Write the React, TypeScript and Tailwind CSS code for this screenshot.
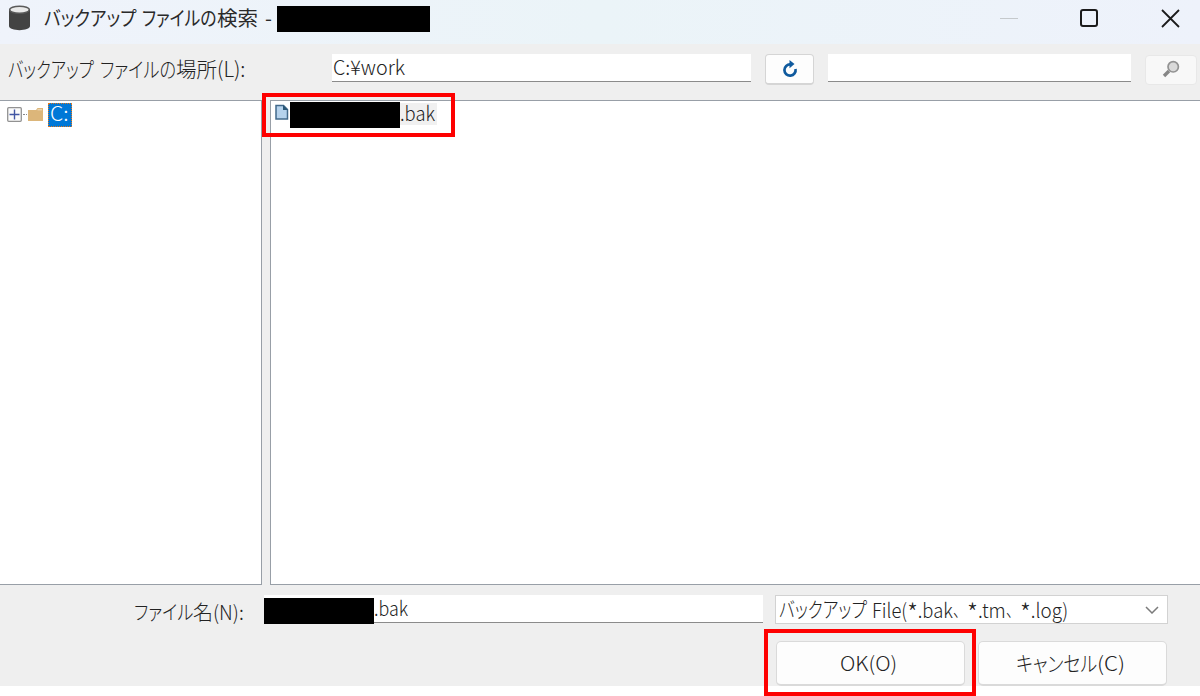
import React, { useLayoutEffect, useRef, useState } from 'react'

type FitProps = {
  className: string
  children: React.ReactNode
}

// UI Gothic has narrow kana, so every run is squeezed into the width of its box
const Fit: React.FC<FitProps> = ({ className, children }) => {
  const box = useRef<HTMLSpanElement>(null)
  const text = useRef<HTMLSpanElement>(null)
  const [scale, setScale] = useState<number>(1)

  useLayoutEffect(() => {
    if (!box.current || !text.current) return
    setScale(box.current.clientWidth / text.current.offsetWidth)
  }, [])

  return (
    <span ref={box} className={`inline-block shrink-0 whitespace-nowrap ${className}`}>
      <span ref={text} className="inline-block origin-left" style={{ transform: `scaleX(${scale})` }}>
        {children}
      </span>
    </span>
  )
}

const Star = () => <span className="relative top-[5px] text-[26px] leading-none">*</span>

const DatabaseIcon = () => (
  <svg className="ml-2 h-[26px] w-[23px]" viewBox="0 0 23 26">
    <path d="M1 5v16c0 5.500 21 5.500 21 0V5z" fill="#434343" />
    <ellipse cx="11.500" cy="4.800" rx="9.800" ry="3.500" fill="#e9e9e9" stroke="#5a5a5a" strokeWidth="1.500" />
  </svg>
)

const FileIcon = () => (
  <svg className="h-[17px] w-[14px]" viewBox="0 0 14 17">
    <path d="M1 1.500h7.500L12.500 5.500V15H1z" fill="#b5d2ec" stroke="#41698a" strokeWidth="1.500" />
    <path d="M8 1v5h5z" fill="#2c5877" />
  </svg>
)

const FolderIcon = () => (
  <svg className="h-[13px] w-4" viewBox="0 0 16 13">
    <path d="M0 2h8l1.500-2H15v13H0z" fill="#dcb67a" />
    <path d="M9.500 1.800H14" stroke="#f3e2c4" strokeWidth="1" />
  </svg>
)

const TitleBar = () => (
  <header className="flex h-11 items-start bg-linear-to-r from-[#eff3fb] via-[#ebf4f8] to-[#eef2fb]">
    <div className="flex h-9 items-center">
      <DatabaseIcon />
      <div className="-mt-px ml-[13px] flex text-[20px] font-normal text-[#2a2a2a]">
        <Fit className="w-[92px] [font-feature-settings:'palt']">バックアップ</Fit>
        <Fit className="ml-[6px] w-[75px] [font-feature-settings:'palt']">ファイルの</Fit>
        <Fit className="w-[41px]">検索</Fit>
        <Fit className="ml-[7px] w-[7px]">-</Fit>
      </div>
      <div className="ml-[5px] mt-px h-[26px] w-[153px] bg-black" />
    </div>
    <div className="ml-auto flex h-9 items-center">
      <div className="mr-[62px] h-px w-[18px] bg-[#c5c9cc]" />
      <div className="mr-[63px] h-[18px] w-[18px] rounded-[3px] border-2 border-[#1b1b1b]" />
      <svg className="mr-5 h-[19px] w-[19px]" viewBox="0 0 19 19">
        <path d="M1 1l17 17M18 1L1 18" stroke="#1b1b1b" strokeWidth="1.800" />
      </svg>
    </div>
  </header>
)

const Toolbar = () => (
  <div className="flex h-14 items-start">
    <div className="ml-2 mt-2 flex w-[324px] text-[21px] leading-8">
      <Fit className="w-[86px] [font-feature-settings:'palt']">バックアップ</Fit>
      <Fit className="ml-[6px] w-[76px] [font-feature-settings:'palt']">ファイルの</Fit>
      <Fit className="w-[41px]">場所</Fit>
      <Fit className="w-[28px]">(L):</Fit>
    </div>
    <div className="mt-[10px] flex h-7 w-[419px] items-center border-b border-[#8b8b8b] bg-white pl-[1px] text-[20px]">
      <Fit className="-mt-[2px] w-[72px]">C:¥work</Fit>
    </div>
    <button className="ml-[14px] mt-[10px] flex h-[31px] w-[49px] items-center justify-center rounded border border-b-2 border-[#d5d5d5] bg-[#fdfdfd]">
      <svg className="h-[18px] w-4" viewBox="0 0 16 18">
        <path d="M8.500 4.500A5.600 5.600 0 1 0 13.500 9" fill="none" stroke="#0f5a9e" strokeWidth="2.700" />
        <path d="M7.500 0v8.200L12.500 4z" fill="#0f5a9e" />
      </svg>
    </button>
    <div className="ml-[14px] mt-[10px] h-7 w-[303px] border-b border-[#8b8b8b] bg-white" />
    <button className="ml-[14px] mt-[11px] flex h-[30px] w-[52px] items-center justify-center rounded border border-[#e8e8e8] bg-[#f8f8f8]">
      <svg className="-mt-[2px] h-[18px] w-[18px]" viewBox="0 0 18 18">
        <path d="M7 11L2 16" stroke="#868686" strokeWidth="3.400" />
        <circle cx="11.200" cy="6.800" r="5.200" fill="#d9d9d9" stroke="#929292" strokeWidth="1.700" />
      </svg>
    </button>
  </div>
)

const Tree = () => (
  <div className="flex w-[262px] items-start border border-l-0 border-[#989fa7] bg-white">
    <div className="ml-[7px] mt-px flex h-[25px] items-center">
      <svg className="h-[15px] w-[15px]" viewBox="0 0 15 15">
        <rect x=".7" y=".7" width="13.600" height="13.600" rx="1" fill="#fbfbfb" stroke="#929292" strokeWidth="1.300" />
        <path d="M2.500 7.500h10M7.500 2.500v10" stroke="#4256a4" strokeWidth="1.400" />
      </svg>
      <div className="ml-[1px] w-1 border-t border-dotted border-[#888]" />
      <div className="-mt-px ml-[1px]">
        <FolderIcon />
      </div>
      <div className="ml-[4px] flex h-[24px] w-[24px] items-center border border-dotted border-[#e5781c] bg-[#0078d7] pl-[1px] text-[20px] leading-none text-white">
        <Fit className="-mt-[3px] w-[19px]">C:</Fit>
      </div>
    </div>
  </div>
)

const FileList = () => (
  <div className="relative ml-2 flex-1 border border-r-0 border-[#989fa7] bg-white">
    <div className="flex h-7 items-center pl-1">
      <div className="-mt-[6px]">
        <FileIcon />
      </div>
      <div className="ml-[1px] h-[26px] w-[110px] bg-black" />
      <div className="-mt-[3px] flex h-[22px] items-center bg-[#f0f0f0] pr-[2px] text-[20px]">
        <Fit className="-mt-px w-[35px]">.bak</Fit>
      </div>
    </div>
    <div className="absolute -left-[9px] -top-[8px] h-[44px] w-[193px] border-4 border-[#fe0000]" />
  </div>
)

const Footer = () => (
  <footer className="flex h-[101px] flex-col">
    <div className="flex h-[41px] items-start text-[20px]">
      <div className="ml-[134px] mt-[11px] flex w-[130px] leading-8">
        <Fit className="w-[59px] [font-feature-settings:'palt']">ファイル</Fit>
        <Fit className="w-[20px]">名</Fit>
        <Fit className="w-[31px]">(N):</Fit>
      </div>
      <div className="mt-[10px] flex h-[28px] w-[499px] border-b border-[#8b8b8b] bg-white">
        <div className="mt-[3px] h-[26px] w-[110px] shrink-0 bg-black" />
        <Fit className="w-[34px] leading-[26px]">.bak</Fit>
      </div>
      <div className="ml-3 mt-[10px] flex h-[29px] w-[393px] items-center border border-[#d2d2d2] bg-white pl-[3px] text-[20px] leading-[27px]">
        <Fit className="-mt-[2px] w-[88px] text-[21px] [font-feature-settings:'palt']">バックアップ</Fit>
        <Fit className="-mt-[2px] ml-[5px] w-[81px]">File(<Star />.bak</Fit>
        <Fit className="-mt-[2px] w-[14px]">、</Fit>
        <Fit className="-mt-[2px] w-[39px]"><Star />.tm</Fit>
        <Fit className="-mt-[2px] w-[14px]">、</Fit>
        <Fit className="-mt-[2px] w-[48px]"><Star />.log)</Fit>
        <svg className="ml-auto mr-2 h-[8px] w-[14px]" viewBox="0 0 14 8">
          <path d="M1 1l6 6 6-6" fill="none" stroke="#7b7b7b" strokeWidth="1.500" />
        </svg>
      </div>
    </div>
    <div className="flex pl-[776px] pt-[15px] text-[20px]">
      <button className="relative flex h-[45px] w-[189px] items-center justify-center rounded-[5px] border border-b-2 border-[#dadada] bg-[#fdfdfd]">
        <Fit className="-ml-1 w-[57px] text-left">OK(O)</Fit>
        <span className="absolute -left-[13px] -top-[13px] h-[67px] w-[212px] border-4 border-[#fe0000]" />
      </button>
      <button className="ml-[13px] flex h-[45px] w-[189px] items-center justify-center rounded-[5px] border border-b-2 border-[#dadada] bg-[#fdfdfd] pr-1 text-left">
        <Fit className="w-[81px] text-[21px] [font-feature-settings:'palt']">キャンセル</Fit>
        <Fit className="w-[28px]">(C)</Fit>
      </button>
    </div>
  </footer>
)

const App: React.FC = () => {
  return (
    <div className="h-[696px] w-[1200px] overflow-hidden bg-white font-['Noto_Sans_CJK_JP',sans-serif] font-light text-[#222]">
      <div className="h-[686px] bg-[#efefef]">
        <TitleBar />
        <Toolbar />
        <main className="flex h-[485px]">
          <Tree />
          <FileList />
        </main>
        <Footer />
      </div>
    </div>
  )
}

export default App
